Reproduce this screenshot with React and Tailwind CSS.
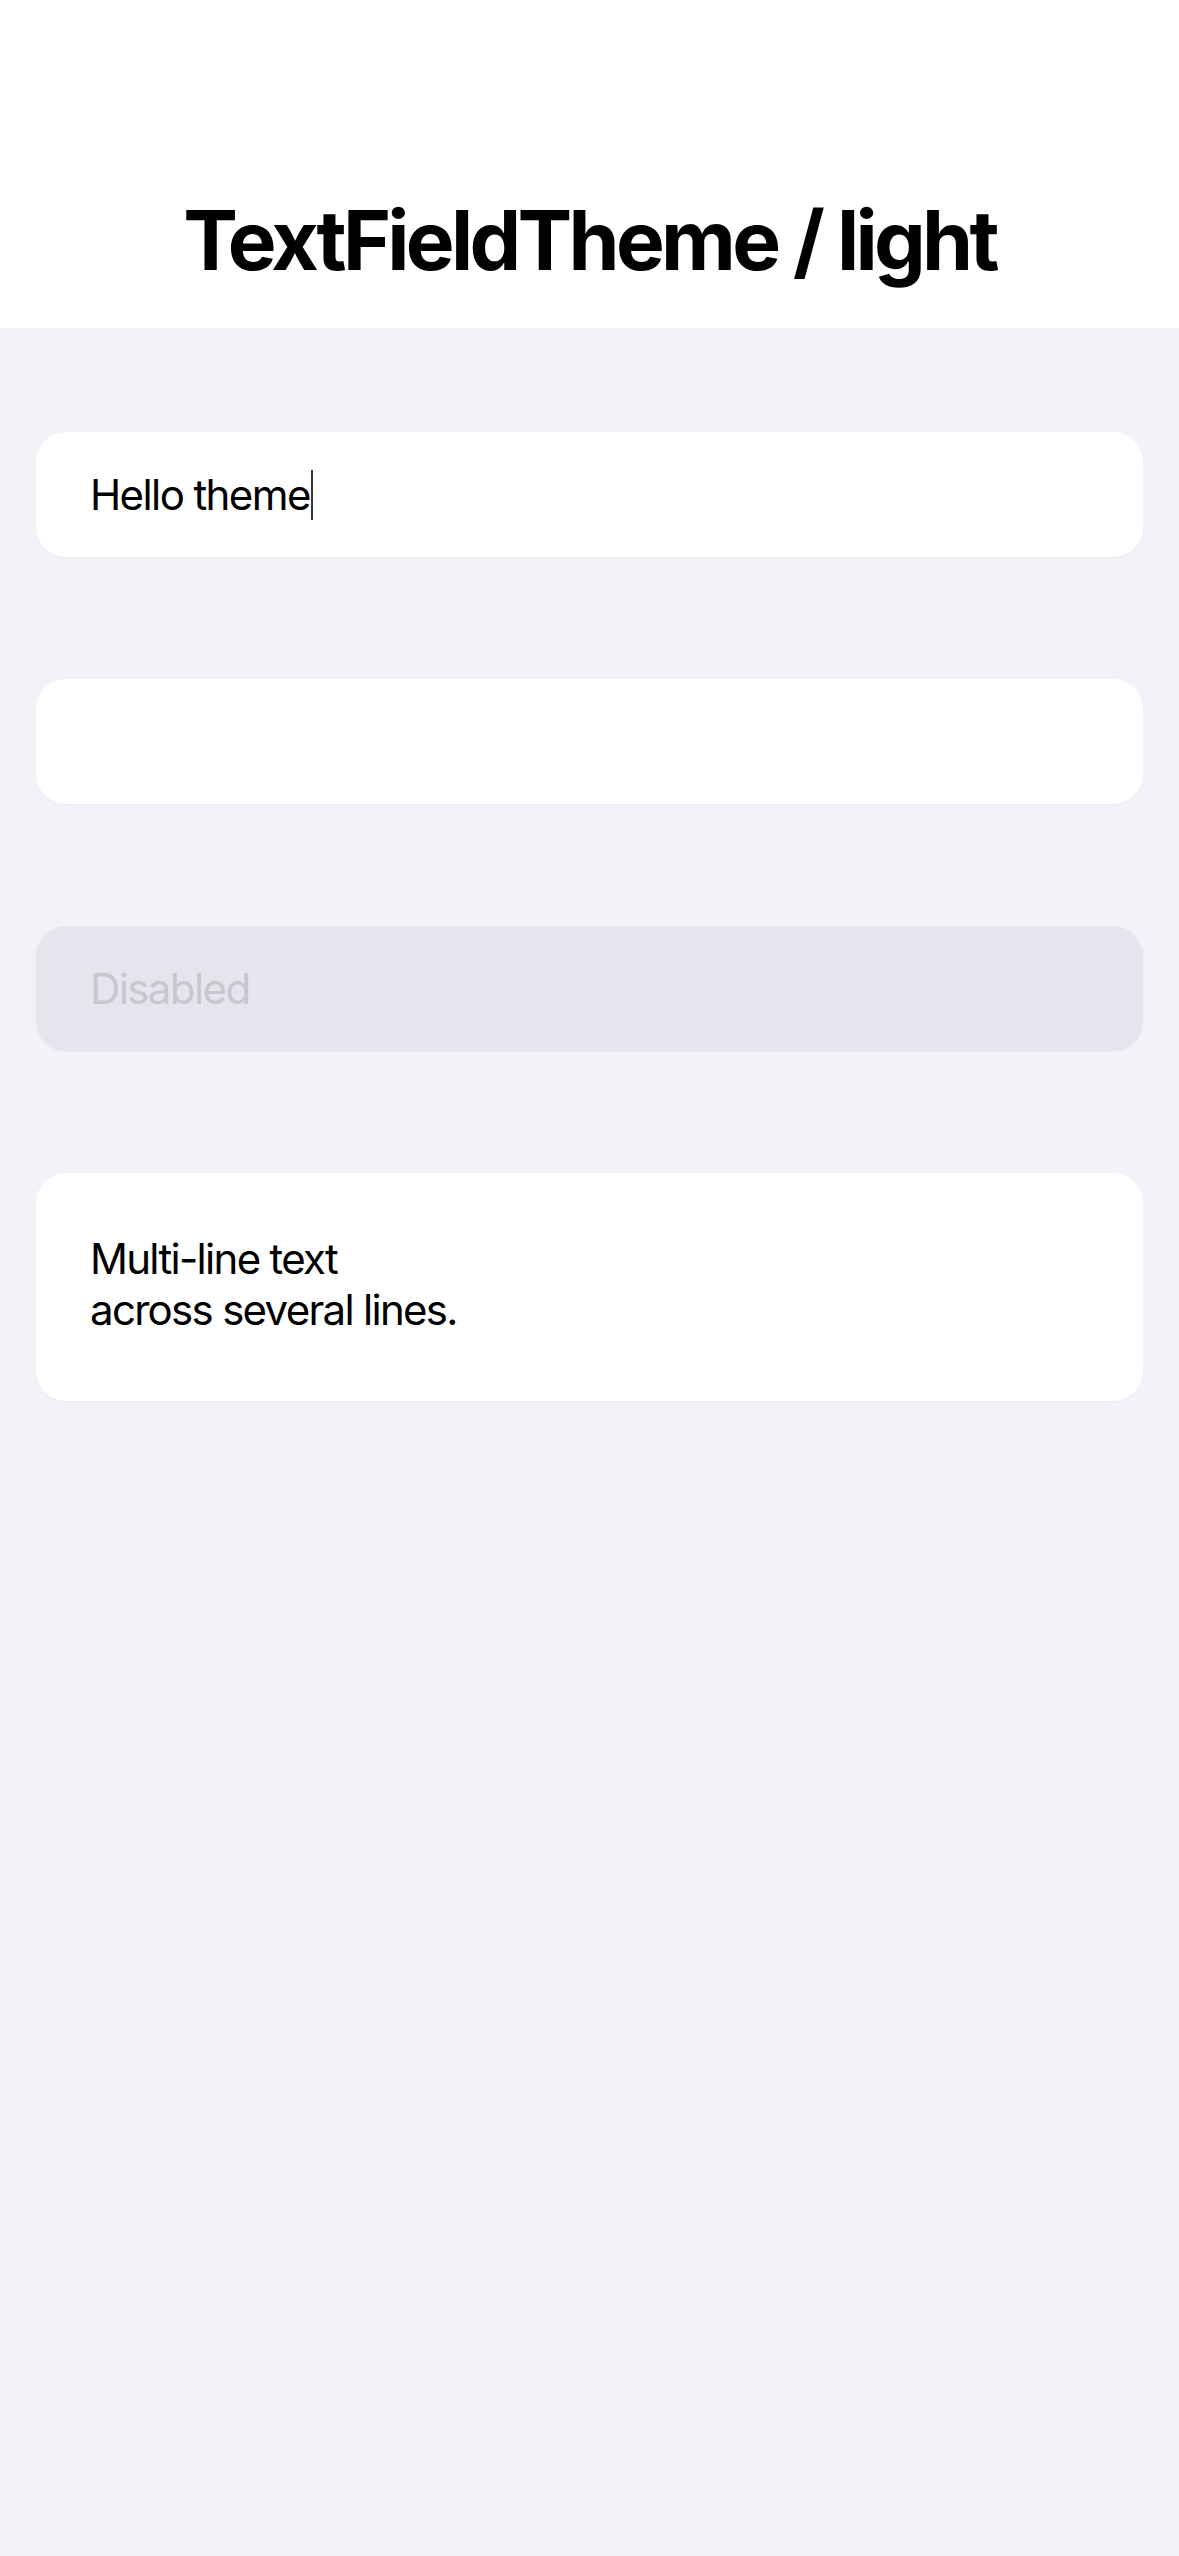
import React from 'react';

const font = { fontFamily: 'Inter, "Noto Sans", sans-serif' };

const Field = ({ children, disabled }) => (
  <div
    className={`h-[125px] rounded-[30px] px-[54px] flex items-center shadow-[0_1px_2px_rgba(0,0,0,0.035)] ${
      disabled ? 'bg-[#e6e5ee]' : 'bg-white'
    }`}
  >
    {children}
  </div>
);

const App = () => {
  return (
    <div className="min-h-screen bg-[#f2f2f8]" style={font}>
      {/* Header */}
      <div className="bg-white h-[328px] flex flex-col justify-end items-center pb-[46px]">
        <h1 className="text-[82px] leading-none font-bold text-black tracking-[-3.7px]">
          TextFieldTheme / light
        </h1>
      </div>

      {/* Fields */}
      <div className="px-[36px] pt-[104px] flex flex-col gap-[122px]">
        <Field>
          <span className="text-[42px] leading-[51px] text-black tracking-[-1.6px]">Hello theme</span>
          <span className="w-[2px] h-[50px] bg-[#3a3a3c] ml-[1px]"></span>
        </Field>

        <Field />

        <Field disabled>
          <span className="text-[42px] leading-[51px] text-[#c7c7ce] tracking-[-1.6px]">Disabled</span>
        </Field>

        <div className="rounded-[30px] bg-white px-[54px] pt-[60px] pb-[66px] shadow-[0_1px_2px_rgba(0,0,0,0.035)]">
          <p className="text-[42px] leading-[51px] text-black tracking-[-1.7px]">Multi-line text</p>
          <p className="text-[42px] leading-[51px] text-black tracking-[-1.7px]">across several lines.</p>
        </div>
      </div>
    </div>
  );
};

export default App;
